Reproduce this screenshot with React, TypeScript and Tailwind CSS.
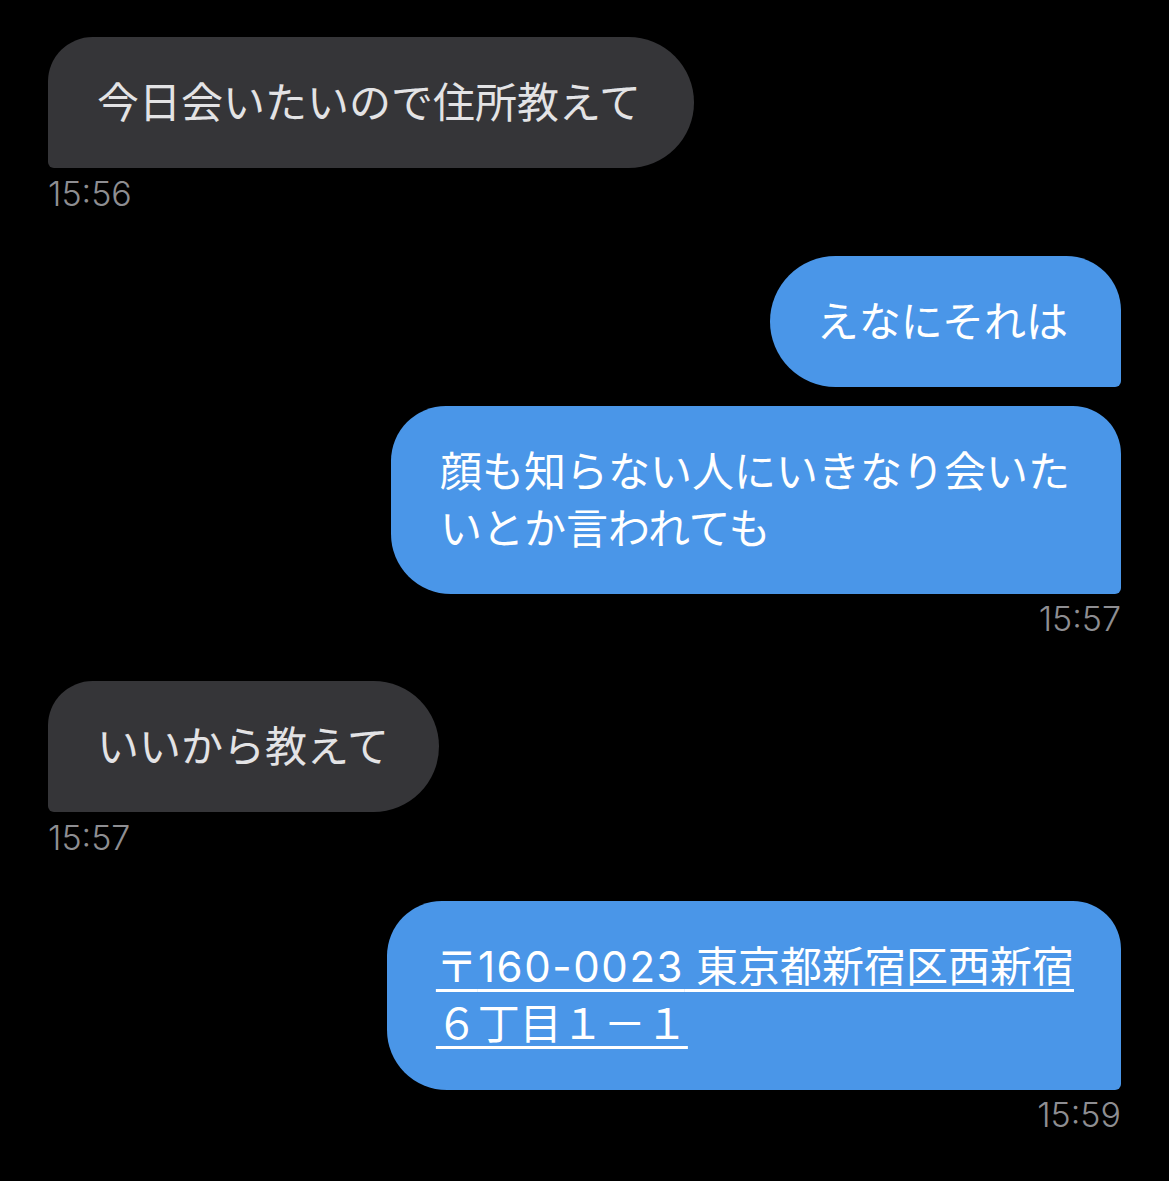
import React from "react";

const jp = { fontFamily: "Inter, 'Noto Sans CJK JP', sans-serif" };

function Time({ t, right }: { t: string; right?: boolean }) {
  return (
    <div
      className={`text-[34px] leading-[36px] font-light text-[#8e8e92] ${right ? "text-right" : ""}`}
      style={{ fontFamily: "Inter, 'Noto Sans', sans-serif" }}
    >
      {t}
    </div>
  );
}

export default function App() {
  return (
    <div className="w-[1169px] h-[1181px] bg-black overflow-hidden" style={jp}>
      <div className="flex flex-col pt-[37px] pl-[48px] pr-[48px]">
        {/* msg 1 */}
        <div className="flex flex-col items-start">
          <div className="bg-[#353538] text-[#e3e3e5] text-[42px] leading-[57px] whitespace-nowrap pl-[49px] pr-[53px] py-[37px] rounded-tl-[45px] rounded-tr-[66px] rounded-br-[66px] rounded-bl-[6px]">
            今日会いたいので住所教えて
          </div>
          <div className="mt-[8px]">
            <Time t="15:56" />
          </div>
        </div>

        {/* msg 2 + 3 */}
        <div className="flex flex-col items-end mt-[44px]">
          <div className="bg-[#4a96e8] text-white text-[42px] leading-[57px] whitespace-nowrap pl-[47px] pr-[53px] py-[37px] rounded-tl-[66px] rounded-bl-[66px] rounded-tr-[55px] rounded-br-[6px]">
            えなにそれは
          </div>
          <div className="mt-[19px] bg-[#4a96e8] text-white text-[42px] leading-[57px] whitespace-nowrap pl-[49px] pr-[51px] py-[37px] rounded-tl-[55px] rounded-bl-[60px] rounded-tr-[48px] rounded-br-[6px]">
            顔も知らない人にいきなり会いた
            <br />
            いとか言われても
          </div>
          <div className="mt-[7px]">
            <Time t="15:57" right />
          </div>
        </div>

        {/* msg 4 */}
        <div className="flex flex-col items-start mt-[44px]">
          <div className="bg-[#353538] text-[#e3e3e5] text-[42px] leading-[57px] whitespace-nowrap pl-[49px] pr-[50px] py-[37px] rounded-tl-[45px] rounded-tr-[66px] rounded-br-[66px] rounded-bl-[6px]">
            いいから教えて
          </div>
          <div className="mt-[8px]">
            <Time t="15:57" />
          </div>
        </div>

        {/* msg 5 */}
        <div className="flex flex-col items-end mt-[45px]">
          <div className="bg-[#4a96e8] text-white text-[42px] leading-[57px] whitespace-nowrap pl-[49px] pr-[47px] pt-[37px] pb-[38px] rounded-tl-[55px] rounded-bl-[60px] rounded-tr-[48px] rounded-br-[6px]">
            <span className="underline decoration-[3px] underline-offset-[7px]">
              〒<span className="tracking-[1.6px]">160-0023</span> 東京都新宿区西新宿
            </span>
            <br />
            <span className="underline decoration-[3px] underline-offset-[7px]">
              ６丁目１－１
            </span>
          </div>
          <div className="mt-[7px]">
            <Time t="15:59" right />
          </div>
        </div>
      </div>
    </div>
  );
}
